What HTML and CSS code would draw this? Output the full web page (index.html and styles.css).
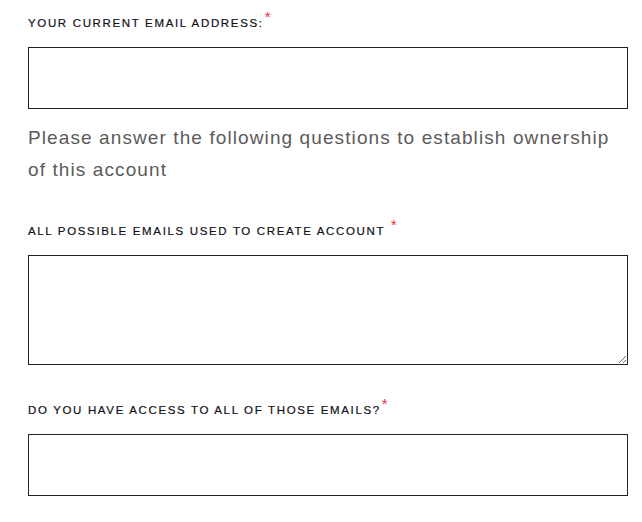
FILE: index.html
```html
<!DOCTYPE html>
<html lang="en">

<head>
    <meta charset="UTF-8">
    <meta name="viewport" content="width=device-width, initial-scale=1.0">
    <title>Account recovery</title>
    <link rel="stylesheet" href="styles.css">
</head>

<body>
    <form id="wrap">
        <div class="field">
            <label class="label" for="email">Your current email address:<span class="req">*</span></label>
            <input class="box" id="email" type="email">
        </div>
        <p class="intro">Please answer the following questions to establish ownership of this account</p>
        <div class="field">
            <label class="label" for="emails">All possible emails used to create account <span class="req">*</span></label>
            <textarea class="box area" id="emails"></textarea>
        </div>
        <div class="field">
            <label class="label" for="access">Do you have access to all of those emails?<span class="req">*</span></label>
            <input class="box" id="access" type="text">
        </div>
    </form>
</body>

</html>
```

FILE: styles.css
```css
body {
    margin: 0;
    background: #fff;
}

#wrap {
    width: 600px;
    padding: 13px 0 0 28px;
    font-family: "Liberation Sans", Arial, sans-serif;
}

.field {
    display: flex;
    flex-direction: column;
}

.field + .field,
.intro + .field {
    margin-top: 35px;
}

.label {
    font-size: 11.5px;
    line-height: 20px;
    letter-spacing: 1.65px;
    text-transform: uppercase;
    color: #111118;
    -webkit-text-stroke: 0.2px #111118;
}

.req {
    margin-left: 1px;
    font-size: 15px;
    vertical-align: 5px;
    line-height: 0;
    color: #e6304c;
    -webkit-text-stroke: 0;
}

.box {
    box-sizing: border-box;
    margin: 14px 0 0;
    width: 600px;
    height: 62px;
    border: 1px solid #222;
    border-radius: 0;
    background: #fff;
    font: 16px "Liberation Sans", Arial, sans-serif;
    padding: 0 12px;
}

.area {
    height: 110px;
    padding: 10px 12px;
    resize: vertical;
}

.intro {
    margin: 13px 0 0;
    font-size: 19px;
    line-height: 32px;
    letter-spacing: 1.1px;
    color: #5b5b5b;
}
```
